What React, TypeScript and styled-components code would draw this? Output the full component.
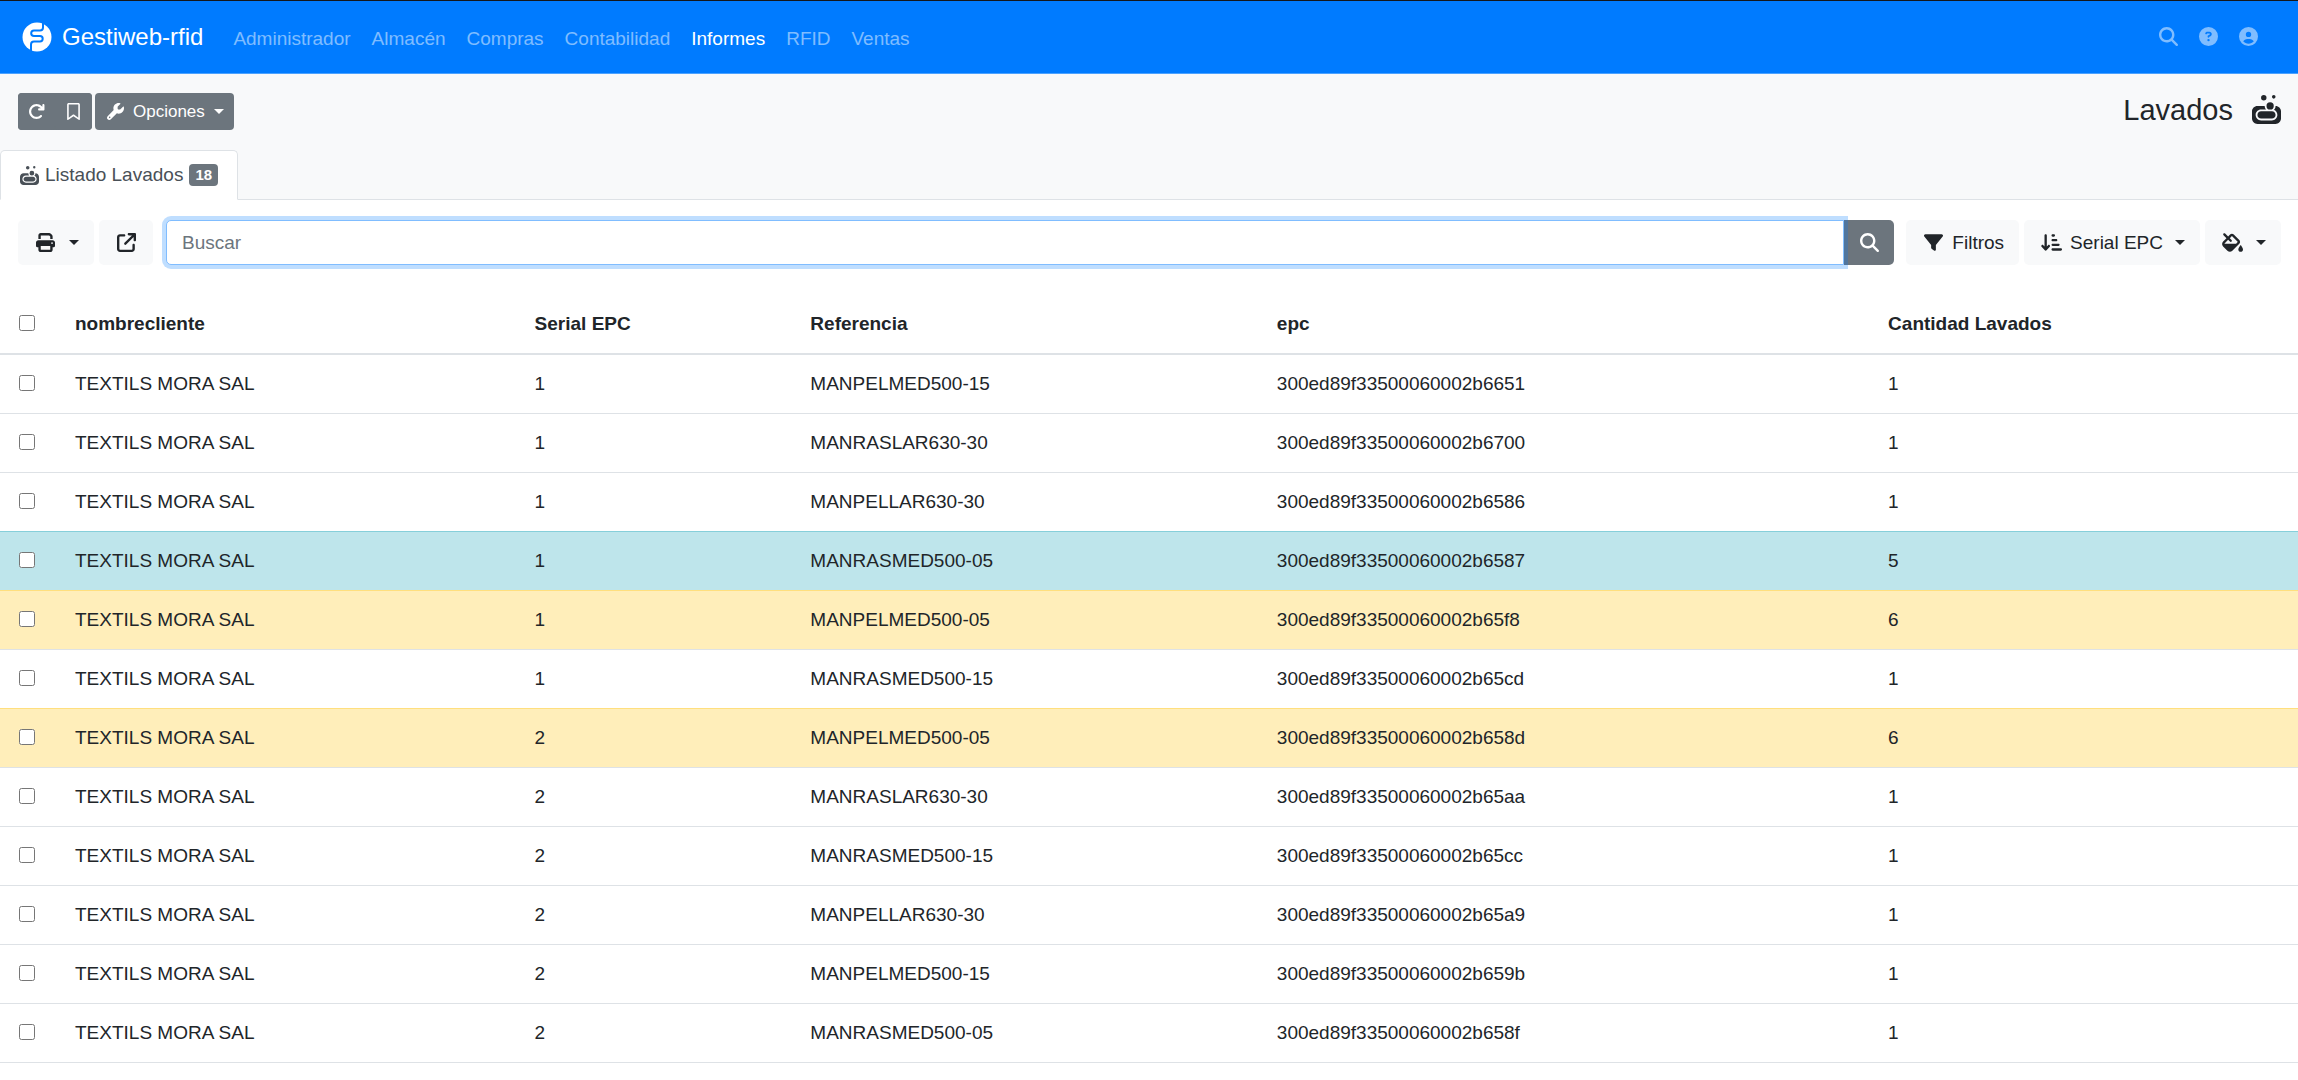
import React from "react";
import styled, { createGlobalStyle } from "styled-components";
import {
  FaArrowDownShortWide,
  FaArrowRotateRight,
  FaArrowUpRightFromSquare,
  FaCircleQuestion,
  FaCircleUser,
  FaFillDrip,
  FaFilter,
  FaMagnifyingGlass,
  FaPrint,
  FaRegBookmark,
  FaSoap,
  FaWrench,
} from "react-icons/fa6";

const GlobalStyle = createGlobalStyle`
  *, *::before, *::after { box-sizing: border-box; }
  body {
    margin: 0;
    background: #fff;
    color: #212529;
    font: 19px/28px "Liberation Sans", Arial, sans-serif;
  }
  button, input { font: inherit; color: inherit; margin: 0; }
  svg { display: block; flex: none; }
`;

const Navbar = styled.nav`
  display: flex;
  align-items: center;
  height: 74px;
  padding: 0 40px 0 22px;
  background: #007bff;
  border-top: 1px solid #14171c;
  border-bottom: 1px solid #4ba2ff;
`;

const Brand = styled.a`
  display: flex;
  align-items: center;
  gap: 10px;
  margin-right: 20px;
  color: #fff;
  font-size: 24px;
  text-decoration: none;
`;

const NavList = styled.ul`
  display: flex;
  gap: 1px;
  margin: 0;
  padding: 4px 0 0;
  list-style: none;
`;

const NavLink = styled.a<{ $active?: boolean }>`
  display: block;
  padding: 0 10px;
  color: ${(p) => (p.$active ? "#fff" : "rgba(255, 255, 255, 0.5)")};
  text-decoration: none;
`;

const NavIcons = styled.div`
  display: flex;
  gap: 21px;
  margin-left: auto;
  padding-bottom: 2px;
`;

const NavIconLink = styled.a`
  color: rgba(255, 255, 255, 0.5);
`;

const Header = styled.header`
  padding-top: 19px;
  background: #f8f9fa;
`;

const HeaderRow = styled.div`
  display: flex;
  align-items: center;
  gap: 3px;
  padding: 0 17px 0 18px;
`;

const ButtonGroup = styled.div`
  display: flex;
  border-radius: 4px;
  background: #6c757d;
`;

const SmallButton = styled.button`
  display: flex;
  align-items: center;
  gap: 7px;
  height: 37px;
  padding: 0 10px;
  border: 0;
  border-radius: 4px;
  background: #6c757d;
  color: #fff;
  font-size: 17px;
`;

const IconSlot = styled.span<{ $width?: number }>`
  display: flex;
  justify-content: center;
  width: ${(p) => p.$width ?? 24}px;
`;

const Caret = styled.span<{ $tight?: boolean }>`
  margin-left: ${(p) => (p.$tight ? "2px" : "5px")};
  border-top: 5px solid;
  border-left: 5px solid transparent;
  border-right: 5px solid transparent;
`;

const Title = styled.h1`
  display: flex;
  align-items: center;
  gap: 19px;
  margin: 0 0 0 auto;
  padding-bottom: 4px;
  font-size: 29px;
  font-weight: 400;
`;

const Tabs = styled.div`
  display: flex;
  margin-top: 20px;
  border-bottom: 1px solid #dee2e6;
`;

const Tab = styled.button`
  display: flex;
  align-items: center;
  gap: 6px;
  height: 50px;
  margin-bottom: -1px;
  padding: 0 19px;
  border: 1px solid #dee2e6;
  border-bottom-color: #fff;
  border-radius: 5px 5px 0 0;
  background: #fff;
  color: #495057;
`;

const Badge = styled.span`
  padding: 0 6px;
  border-radius: 4px;
  background: #6c757d;
  color: #fff;
  font-size: 15px;
  font-weight: 700;
  line-height: 22px;
`;

const Toolbar = styled.div`
  display: flex;
  gap: 5px;
  padding: 20px 17px 30px 18px;
`;

const ToolButton = styled.button`
  display: flex;
  align-items: center;
  gap: 7px;
  height: 45px;
  padding: 0 15px;
  border: 0;
  border-radius: 5px;
  background: #f8f9fa;
`;

const SearchGroup = styled.form`
  display: flex;
  flex: 1;
  margin: 0 7px 0 8px;
`;

const SearchInput = styled.input`
  flex: 1;
  min-width: 0;
  height: 45px;
  padding: 0 15px;
  border: 1px solid #80bdff;
  border-radius: 5px 0 0 5px;
  outline: 0;
  box-shadow: 0 0 0 4px rgba(0, 123, 255, 0.25);
  position: relative;
  z-index: 1;
  &::placeholder { color: #6c757d; opacity: 1; }
`;

const SearchButton = styled.button`
  display: flex;
  align-items: center;
  justify-content: center;
  width: 50px;
  height: 45px;
  border: 0;
  border-radius: 0 5px 5px 0;
  background: #6c757d;
  color: #fff;
`;

const Table = styled.table`
  width: 100%;
  table-layout: fixed;
  border-collapse: collapse;
  border-bottom: 1px solid #dee2e6;
`;

const Column = styled.col<{ $width?: string }>`
  width: ${(p) => p.$width ?? "auto"};
`;

const HeadCell = styled.th`
  padding: 15px 18px;
  border-bottom: 2px solid #dee2e6;
  text-align: left;
`;

type Tone = "plain" | "info" | "warning";

const tones: Record<Tone, { background: string; line: string }> = {
  plain: { background: "transparent", line: "#dee2e6" },
  info: { background: "#bee5eb", line: "#86cfda" },
  warning: { background: "#ffeeba", line: "#ffdf7e" },
};

const Row = styled.tr<{ $tone: Tone }>`
  background: ${(p) => tones[p.$tone].background};
  td { border-top: 1px solid ${(p) => tones[p.$tone].line}; }
`;

const Cell = styled.td`
  padding: 15px 18px;
`;

const Checkbox = styled.input`
  display: block;
  width: 16px;
  height: 16px;
  margin: 0 0 2px 1px;
`;

const navItems = ["Administrador", "Almacén", "Compras", "Contabilidad", "Informes", "RFID", "Ventas"];

const columns = ["nombrecliente", "Serial EPC", "Referencia", "epc", "Cantidad Lavados"];

const client = "TEXTILS MORA SAL";

const rows: { serial: number; ref: string; epc: string; washes: number; tone: Tone }[] = [
  { serial: 1, ref: "MANPELMED500-15", epc: "300ed89f33500060002b6651", washes: 1, tone: "plain" },
  { serial: 1, ref: "MANRASLAR630-30", epc: "300ed89f33500060002b6700", washes: 1, tone: "plain" },
  { serial: 1, ref: "MANPELLAR630-30", epc: "300ed89f33500060002b6586", washes: 1, tone: "plain" },
  { serial: 1, ref: "MANRASMED500-05", epc: "300ed89f33500060002b6587", washes: 5, tone: "info" },
  { serial: 1, ref: "MANPELMED500-05", epc: "300ed89f33500060002b65f8", washes: 6, tone: "warning" },
  { serial: 1, ref: "MANRASMED500-15", epc: "300ed89f33500060002b65cd", washes: 1, tone: "plain" },
  { serial: 2, ref: "MANPELMED500-05", epc: "300ed89f33500060002b658d", washes: 6, tone: "warning" },
  { serial: 2, ref: "MANRASLAR630-30", epc: "300ed89f33500060002b65aa", washes: 1, tone: "plain" },
  { serial: 2, ref: "MANRASMED500-15", epc: "300ed89f33500060002b65cc", washes: 1, tone: "plain" },
  { serial: 2, ref: "MANPELLAR630-30", epc: "300ed89f33500060002b65a9", washes: 1, tone: "plain" },
  { serial: 2, ref: "MANPELMED500-15", epc: "300ed89f33500060002b659b", washes: 1, tone: "plain" },
  { serial: 2, ref: "MANRASMED500-05", epc: "300ed89f33500060002b658f", washes: 1, tone: "plain" },
];

const Logo = () => (
  <svg width="30" height="30" viewBox="0 0 30 30" aria-hidden="true">
    <circle cx="15" cy="15" r="14.5" fill="#fff" />
    <path
      d="M21 0v5.5q0 3-3 3h-6a2.8 2.8 0 0 0 0 5.6h6a2.7 2.7 0 0 1 0 5.4h-6q-3 0-3 3V30"
      fill="none"
      stroke="#007bff"
      strokeWidth="2"
    />
  </svg>
);

export default function App() {
  return (
    <>
      <GlobalStyle />
      <Navbar>
        <Brand href="#">
          <Logo />
          Gestiweb-rfid
        </Brand>
        <NavList>
          {navItems.map((item) => (
            <li key={item}>
              <NavLink href="#" $active={item === "Informes"}>
                {item}
              </NavLink>
            </li>
          ))}
        </NavList>
        <NavIcons>
          <NavIconLink href="#" aria-label="Buscar">
            <FaMagnifyingGlass size={19} />
          </NavIconLink>
          <NavIconLink href="#" aria-label="Ayuda">
            <FaCircleQuestion size={19} />
          </NavIconLink>
          <NavIconLink href="#" aria-label="Usuario">
            <FaCircleUser size={19} />
          </NavIconLink>
        </NavIcons>
      </Navbar>

      <Header>
        <HeaderRow>
          <ButtonGroup>
            <SmallButton type="button" aria-label="Recargar">
              <IconSlot $width={17}>
                <FaArrowRotateRight size={17} />
              </IconSlot>
            </SmallButton>
            <SmallButton type="button" aria-label="Marcador">
              <IconSlot $width={17}>
                <FaRegBookmark size={17} />
              </IconSlot>
            </SmallButton>
          </ButtonGroup>
          <SmallButton type="button">
            <IconSlot $width={21}>
              <FaWrench size={17} />
            </IconSlot>
            Opciones
            <Caret $tight />
          </SmallButton>
          <Title>
            Lavados
            <FaSoap size={29} />
          </Title>
        </HeaderRow>
        <Tabs role="tablist">
          <Tab type="button" role="tab" aria-selected="true">
            <FaSoap size={19} />
            Listado Lavados
            <Badge>18</Badge>
          </Tab>
        </Tabs>
      </Header>

      <Toolbar>
        <ToolButton type="button" aria-label="Imprimir">
          <IconSlot>
            <FaPrint size={19} />
          </IconSlot>
          <Caret />
        </ToolButton>
        <ToolButton type="button" aria-label="Abrir">
          <IconSlot>
            <FaArrowUpRightFromSquare size={19} />
          </IconSlot>
        </ToolButton>
        <SearchGroup role="search">
          <SearchInput type="text" placeholder="Buscar" aria-label="Buscar" />
          <SearchButton type="button" aria-label="Buscar">
            <FaMagnifyingGlass size={19} />
          </SearchButton>
        </SearchGroup>
        <ToolButton type="button">
          <IconSlot>
            <FaFilter size={19} />
          </IconSlot>
          Filtros
        </ToolButton>
        <ToolButton type="button">
          <IconSlot>
            <FaArrowDownShortWide size={21} />
          </IconSlot>
          Serial EPC
          <Caret />
        </ToolButton>
        <ToolButton type="button" aria-label="Color">
          <IconSlot>
            <FaFillDrip size={21} />
          </IconSlot>
          <Caret />
        </ToolButton>
      </Toolbar>

      <Table>
        <colgroup>
          <Column $width="57px" />
          <Column $width="20%" />
          <Column $width="12%" />
          <Column $width="20.3%" />
          <Column $width="26.6%" />
          <Column />
        </colgroup>
        <thead>
          <tr>
            <HeadCell>
              <Checkbox type="checkbox" aria-label="Seleccionar todo" />
            </HeadCell>
            {columns.map((name) => (
              <HeadCell key={name}>{name}</HeadCell>
            ))}
          </tr>
        </thead>
        <tbody>
          {rows.map((row) => (
            <Row key={row.epc} $tone={row.tone}>
              <Cell>
                <Checkbox type="checkbox" aria-label={`Seleccionar ${row.epc}`} />
              </Cell>
              <Cell>{client}</Cell>
              <Cell>{row.serial}</Cell>
              <Cell>{row.ref}</Cell>
              <Cell>{row.epc}</Cell>
              <Cell>{row.washes}</Cell>
            </Row>
          ))}
        </tbody>
      </Table>
    </>
  );
}
